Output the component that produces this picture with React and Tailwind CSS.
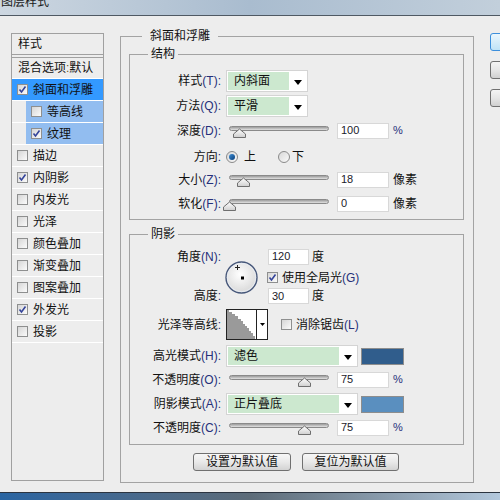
import React from "react";

// Photoshop "图层样式" dialog, bevel & emboss page

const styleRows = [
  { label: "斜面和浮雕", checked: true, level: 0, active: true },
  { label: "等高线", checked: false, level: 1, sub: true },
  { label: "纹理", checked: true, level: 1, sub: true },
  { label: "描边", checked: false },
  { label: "内阴影", checked: true },
  { label: "内发光", checked: false },
  { label: "光泽", checked: false },
  { label: "颜色叠加", checked: false },
  { label: "渐变叠加", checked: false },
  { label: "图案叠加", checked: false },
  { label: "外发光", checked: true },
  { label: "投影", checked: false },
];

function Check({ checked }) {
  return (
    <div className="flex h-[11px] w-[11px] shrink-0 items-center justify-center border border-[#8e8f8f] bg-gradient-to-br from-[#d6d6d6] to-[#fbfbfb]">
      {checked && (
        <svg width="9" height="9" viewBox="0 0 9 9">
          <path d="M1.5 4.5 L3.5 7 L7.5 1.5" fill="none" stroke="#34449a" strokeWidth="1.6" />
        </svg>
      )}
    </div>
  );
}

function Label({ text, k }) {
  return (
    <div className="w-[91px] shrink-0 text-right whitespace-nowrap">
      {text}
      {k && <span className="text-[#26307a]">({k})</span>}
      <span className="text-[#26307a]">:</span>
    </div>
  );
}

function Tri() {
  return (
    <svg width="8" height="5" viewBox="0 0 8 5">
      <path d="M0 0 H8 L4 5 Z" fill="#000" />
    </svg>
  );
}

function Select({ value, w }) {
  return (
    <div className={`ml-[5px] flex h-[22px] ${w} border border-[#d4d4d4] bg-white p-[1px]`}>
      <div className="flex flex-1 items-center bg-[#cce8cf] pl-[6px]">{value}</div>
      <div className="flex w-[17px] items-center justify-center pt-[2px]">
        <Tri />
      </div>
    </div>
  );
}

function NumBox({ value, w = "w-[52px]" }) {
  return (
    <div className={`flex h-[16px] ${w} items-center border border-[#d8d8d8] bg-white pl-[3px] text-[11px] text-[#1a1a2a]`}>
      {value}
    </div>
  );
}

function Slider({ pct }) {
  return (
    <div className="relative ml-[8px] h-[17px] w-[100px]">
      <div className="mt-[4px] h-[5px] w-full rounded-full border border-[#8a8a8a] bg-gradient-to-b from-[#9c9c9c] to-[#e2e2e2]" />
      <svg
        className="absolute top-[6px] -ml-[7px]"
        style={{ left: `${pct}%` }}
        width="15"
        height="10"
        viewBox="0 0 15 10"
      >
        <defs>
          <linearGradient id="th" x1="0" y1="0" x2="0" y2="1">
            <stop offset="0" stopColor="#ffffff" />
            <stop offset="1" stopColor="#cfcfcf" />
          </linearGradient>
        </defs>
        <path d="M1.5 9.5 V6 L7.5 1 L13.5 6 V9.5 Z" fill="url(#th)" stroke="#6f6f6f" />
      </svg>
    </div>
  );
}

function SliderRow({ text, k, pct, value, unit }) {
  return (
    <div className="flex h-[17px] items-center">
      <Label text={text} k={k} />
      <Slider pct={pct} />
      <div className="ml-[8px]">
        <NumBox value={value} />
      </div>
      <div className={`ml-[4px] ${unit === "%" ? "text-[11px] text-[#26307a]" : ""}`}>{unit}</div>
    </div>
  );
}

function Radio({ on }) {
  return (
    <div className="flex h-[12px] w-[12px] shrink-0 items-center justify-center rounded-full border border-[#8a8a8a] bg-gradient-to-br from-[#d8d8d8] to-[#fafafa]">
      {on && <div className="h-[6px] w-[6px] rounded-full bg-gradient-to-br from-[#3f8fd6] to-[#0b3f7a]" />}
    </div>
  );
}

function Group({ title, className = "", children }) {
  return (
    <div className={`border border-[#a3a3a3] ${className}`}>
      <div className="-mt-[8px] ml-[18px] w-fit bg-[#ededed] px-[3px] leading-[14px]">{title}</div>
      {children}
    </div>
  );
}

function Dial() {
  return (
    <svg width="33" height="33" viewBox="0 0 33 33">
      <defs>
        <radialGradient id="dl" cx="0.45" cy="0.4" r="0.6">
          <stop offset="0" stopColor="#ffffff" />
          <stop offset="1" stopColor="#d9d9d9" />
        </radialGradient>
      </defs>
      <circle cx="16.5" cy="16.5" r="15.5" fill="url(#dl)" stroke="#46577a" strokeWidth="1.4" />
      <circle cx="16.5" cy="16.5" r="14.2" fill="none" stroke="#e9eef5" strokeWidth="0.8" />
      <path d="M12.5 4 V9 M10 6.5 H15" stroke="#222" strokeWidth="1" />
      <rect x="16" y="15.5" width="3" height="3" fill="#000" />
    </svg>
  );
}

function Contour() {
  return (
    <div className="ml-[5px] flex h-[31px] w-[42px] border border-[#222] bg-white">
      <svg width="29" height="29" viewBox="0 0 29 29" className="shrink-0">
        <path
          d="M0 0 H2 V2 H5 V4 H8 V6 H11 V9 H14 V11 H16 V14 H18 V16 H20 V18 H22 V21 H24 V23 H26 V26 H28 V29 H0 Z"
          fill="#9a9a9a"
        />
      </svg>
      <div className="flex flex-1 items-center justify-center border-l border-[#222]">
        <svg width="5" height="3" viewBox="0 0 5 3">
          <path d="M0 0 H5 L2.5 3 Z" fill="#000" />
        </svg>
      </div>
    </div>
  );
}

function Btn({ children, w }) {
  return (
    <div
      className={`flex h-[18px] ${w} items-center justify-center rounded-[3px] border border-[#707070] bg-gradient-to-b from-[#f7f7f7] via-[#e9e9e9] to-[#d3d3d3]`}
    >
      {children}
    </div>
  );
}

export default function App() {
  return (
    <div className="flex h-[500px] w-[500px] flex-col overflow-hidden bg-[#ededed] font-['Liberation_Sans','Noto_Sans_CJK_SC',sans-serif] text-[12px] text-[#111]">
      {/* title bar */}
      <div className="h-[16px] shrink-0 overflow-hidden border-b border-[#4f5963] bg-gradient-to-r from-[#cdd7e1] via-[#a9bccf] to-[#c2cfdb]">
        <div className="-mt-[5px] pl-[1px] leading-[14px] text-[#1a1a1a]">图层样式</div>
      </div>

      {/* body */}
      <div className="flex flex-1 items-start">
        {/* style list */}
        <div className="ml-[11px] mt-[17px] h-[448px] w-[93px] shrink-0 border border-[#a0a0a0]">
          <div className="h-[21px] border-b border-[#a0a0a0] pl-[6px] leading-[20px]">样式</div>
          <div className="h-[2px]" />
          <div className="h-[22px] border-t border-b border-t-[#a0a0a0] border-b-white pl-[6px] leading-[20px] whitespace-nowrap">
            混合选项<span className="text-[#6a5a20]">:</span>默认
          </div>
          {styleRows.map((r) => (
            <div key={r.label} className="flex h-[22px] border-b border-white">
              <div
                className={`flex flex-1 items-center gap-[5px] pl-[5px] ${r.active ? "bg-[#3399ff]" : ""} ${
                  r.sub ? "ml-[14px] bg-[#92bdf0]" : ""
                }`}
              >
                <Check checked={r.checked} />
                <span>{r.label}</span>
              </div>
            </div>
          ))}
        </div>

        {/* main group */}
        <div className="ml-[16px] mt-[20px] w-[354px] shrink-0 border border-[#a3a3a3] pb-[11px] pl-[8px] pr-[9px]">
          <div className="-mt-[8px] ml-[13px] w-fit bg-[#ededed] px-[8px] leading-[14px]">斜面和浮雕</div>

          <Group title="结构" className="mt-[11px] pb-[7px]">
            <div className="mt-[9px] flex h-[22px] items-center">
              <Label text="样式" k="T" />
              <Select value="内斜面" w="w-[82px]" />
            </div>
            <div className="mt-[3px] flex h-[22px] items-center">
              <Label text="方法" k="Q" />
              <Select value="平滑" w="w-[82px]" />
            </div>
            <div className="mt-[5px]">
              <SliderRow text="深度" k="D" pct={10} value="100" unit="%" />
            </div>
            <div className="mt-[9px] flex h-[17px] items-center">
              <Label text="方向" />
              <div className="ml-[5px]">
                <Radio on />
              </div>
              <span className="ml-[6px]">上</span>
              <div className="ml-[22px]">
                <Radio />
              </div>
              <span className="ml-[2px]">下</span>
            </div>
            <div className="mt-[6px]">
              <SliderRow text="大小" k="Z" pct={14} value="18" unit="像素" />
            </div>
            <div className="mt-[7px]">
              <SliderRow text="软化" k="F" pct={0} value="0" unit="像素" />
            </div>
          </Group>

          <Group title="阴影" className="mt-[14px] pb-[8px]">
            <div className="mt-[7px] flex h-[56px] items-start">
              <div className="flex h-[56px] flex-col justify-between">
                <div className="flex h-[17px] items-center">
                  <Label text="角度" k="N" />
                </div>
                <div className="flex h-[17px] items-center">
                  <Label text="高度" />
                </div>
              </div>
              <div className="ml-[4px] mt-[13px]">
                <Dial />
              </div>
              <div className="ml-[10px] flex flex-col">
                <div className="flex h-[17px] items-center">
                  <NumBox value="120" w="w-[41px]" />
                  <span className="ml-[3px]">度</span>
                </div>
                <div className="-ml-[1px] mt-[6px] flex h-[13px] items-center gap-[4px]">
                  <Check checked />
                  <span>
                    使用全局光<span className="text-[#26307a]">(G)</span>
                  </span>
                </div>
                <div className="mt-[4px] flex h-[16px] items-center">
                  <NumBox value="30" w="w-[41px]" />
                  <span className="ml-[3px]">度</span>
                </div>
              </div>
            </div>

            <div className="mt-[5px] flex h-[31px] items-center">
              <Label text="光泽等高线" />
              <Contour />
              <div className="ml-[13px] flex items-center gap-[4px]">
                <Check />
                <span>
                  消除锯齿<span className="text-[#26307a]">(L)</span>
                </span>
              </div>
            </div>

            <div className="mt-[5px] flex h-[22px] items-center">
              <Label text="高光模式" k="H" />
              <Select value="滤色" w="w-[132px]" />
              <div className="ml-[3px] h-[17px] w-[43px] border border-[#8d8d8d] bg-[#305d8c]" />
            </div>
            <div className="mt-[4px]">
              <SliderRow text="不透明度" k="O" pct={75} value="75" unit="%" />
            </div>
            <div className="mt-[5px] flex h-[22px] items-center">
              <Label text="阴影模式" k="A" />
              <Select value="正片叠底" w="w-[132px]" />
              <div className="ml-[3px] h-[17px] w-[43px] border border-[#8d8d8d] bg-[#5a8fbf]" />
            </div>
            <div className="mt-[4px]">
              <SliderRow text="不透明度" k="C" pct={75} value="75" unit="%" />
            </div>
          </Group>

          <div className="mt-[8px] flex gap-[11px] pl-[64px]">
            <Btn w="w-[98px]">设置为默认值</Btn>
            <Btn w="w-[97px]">复位为默认值</Btn>
          </div>
        </div>

        {/* right buttons (cut off) */}
        <div className="ml-[16px] mt-[17px] flex shrink-0 flex-col gap-[10px]">
          <div className="h-[18px] w-[70px] rounded-[3px] border border-[#3c8fdc] bg-gradient-to-b from-[#eaf6fd] to-[#bfe3f7]" />
          <div className="h-[18px] w-[70px] rounded-[3px] border border-[#707070] bg-gradient-to-b from-[#f4f4f4] via-[#e6e6e6] to-[#d0d0d0]" />
          <div className="h-[18px] w-[70px] rounded-[3px] border border-[#707070] bg-gradient-to-b from-[#f4f4f4] via-[#e6e6e6] to-[#d0d0d0]" />
        </div>
      </div>

      {/* taskbar strip */}
      <div className="h-[8px] shrink-0 border-t border-[#2b3440] bg-gradient-to-r from-[#2a65a2] via-[#5d6c79] to-[#b3c8dc]" />
    </div>
  );
}
